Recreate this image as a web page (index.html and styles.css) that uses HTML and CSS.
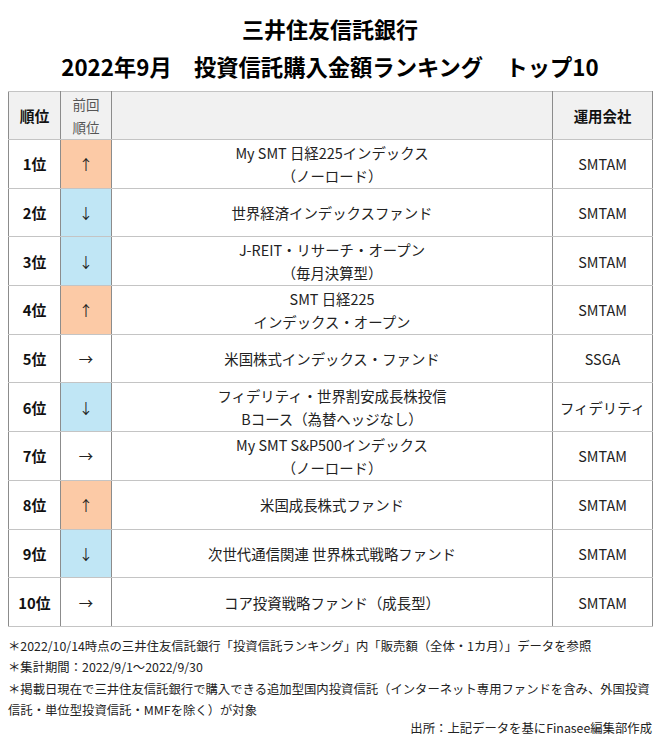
FILE: index.html
```html
<!DOCTYPE html>
<html lang="ja">
<head>
<meta charset="utf-8">
<link rel="stylesheet" href="styles.css">
</head>
<body>
<div class="page">
  <h1 class="title">
    <span class="t1">三井住友信託銀行</span>
    <span class="t2">2022年9月　投資信託購入金額ランキング　トップ10</span>
  </h1>
  <table class="rank">
    <colgroup>
      <col class="c-rank"><col class="c-prev"><col class="c-name"><col class="c-co">
    </colgroup>
    <tr class="head">
      <th class="rk">順位</th>
      <th class="prevh">前回<br>順位</th>
      <th></th>
      <th class="coh">運用会社</th>
    </tr>
    <tr><td class="rk">1位</td><td class="mv up">↑</td><td class="nm">My SMT 日経225インデックス<br>（ノーロード）</td><td class="co">SMTAM</td></tr>
    <tr><td class="rk">2位</td><td class="mv down">↓</td><td class="nm">世界経済インデックスファンド</td><td class="co">SMTAM</td></tr>
    <tr><td class="rk">3位</td><td class="mv down">↓</td><td class="nm">J-REIT・リサーチ・オープン<br>（毎月決算型）</td><td class="co">SMTAM</td></tr>
    <tr><td class="rk">4位</td><td class="mv up">↑</td><td class="nm">SMT 日経225<br>インデックス・オープン</td><td class="co">SMTAM</td></tr>
    <tr><td class="rk">5位</td><td class="mv">→</td><td class="nm">米国株式インデックス・ファンド</td><td class="co">SSGA</td></tr>
    <tr><td class="rk">6位</td><td class="mv down">↓</td><td class="nm">フィデリティ・世界割安成長株投信<br>Bコース（為替ヘッジなし）</td><td class="co">フィデリティ</td></tr>
    <tr><td class="rk">7位</td><td class="mv">→</td><td class="nm">My SMT S&amp;P500インデックス<br>（ノーロード）</td><td class="co">SMTAM</td></tr>
    <tr><td class="rk">8位</td><td class="mv up">↑</td><td class="nm">米国成長株式ファンド</td><td class="co">SMTAM</td></tr>
    <tr><td class="rk">9位</td><td class="mv down">↓</td><td class="nm">次世代通信関連 世界株式戦略ファンド</td><td class="co">SMTAM</td></tr>
    <tr><td class="rk">10位</td><td class="mv">→</td><td class="nm">コア投資戦略ファンド（成長型）</td><td class="co">SMTAM</td></tr>
  </table>
  <div class="notes">
    <p>＊2022/10/14時点の三井住友信託銀行「投資信託ランキング」内「販売額（全体・1カ月）」データを参照</p>
    <p>＊集計期間：2022/9/1～2022/9/30</p>
    <p>＊掲載日現在で三井住友信託銀行で購入できる追加型国内投資信託（インターネット専用ファンドを含み、外国投資信託・単位型投資信託・MMFを除く）が対象</p>
    <p class="src">出所：上記データを基にFinasee編集部作成</p>
  </div>
</div>
</body>
</html>
```
FILE: styles.css
```css
* { box-sizing: border-box; }
html, body { margin: 0; padding: 0; background: #fff; }
body {
  font-family: "Noto Sans CJK JP", "Noto Sans", sans-serif;
  color: #111;
  width: 660px;
}
.page { padding: 0 8px; }
.title {
  margin: 0;
  padding-top: 9px;
  display: flex;
  flex-direction: column;
  align-items: center;
  font-weight: 700;
  font-size: 22px;
  line-height: 38px;
  color: #000;
}
.title .t2 { font-size: 22.3px; }
.rank {
  margin-top: 6px;
  width: 644px;
  border-collapse: collapse;
  table-layout: fixed;
  border: 1px solid #999;
}
.c-rank { width: 52px; }
.c-prev { width: 51px; }
.c-name { width: 441px; }
.c-co { width: 100px; }
.rank th, .rank td {
  border-left: 1px solid #8c8c8c;
  border-right: 1px solid #8c8c8c;
  border-top: 1px solid #c4c4c4;
  border-bottom: 1px solid #c4c4c4;
  text-align: center;
  vertical-align: middle;
  padding: 0;
  font-size: 14.4px;
  line-height: 23px;
  color: #222;
}
.rank tr { height: 48.7px; }
.rank tr.head { height: 48px; }
.head th { background: #f1f1f1; }
.rk { font-weight: 700; color: #111 !important; font-size: 14.8px !important; }
.head th.prevh { font-weight: 400; font-size: 13.5px; line-height: 23px; color: #555; }
.head th.coh { font-weight: 700; color: #111; }
.mv { color: #333; }
.mv.up { background: #fccaa6; }
.mv.down { background: #c0e6f5; }
.notes {
  margin-top: 9px;
  font-size: 12.35px;
  line-height: 21.5px;
  color: #222;
}
.notes p { margin: 0; }
.notes .src { text-align: right; margin-top: -4px; }
```
